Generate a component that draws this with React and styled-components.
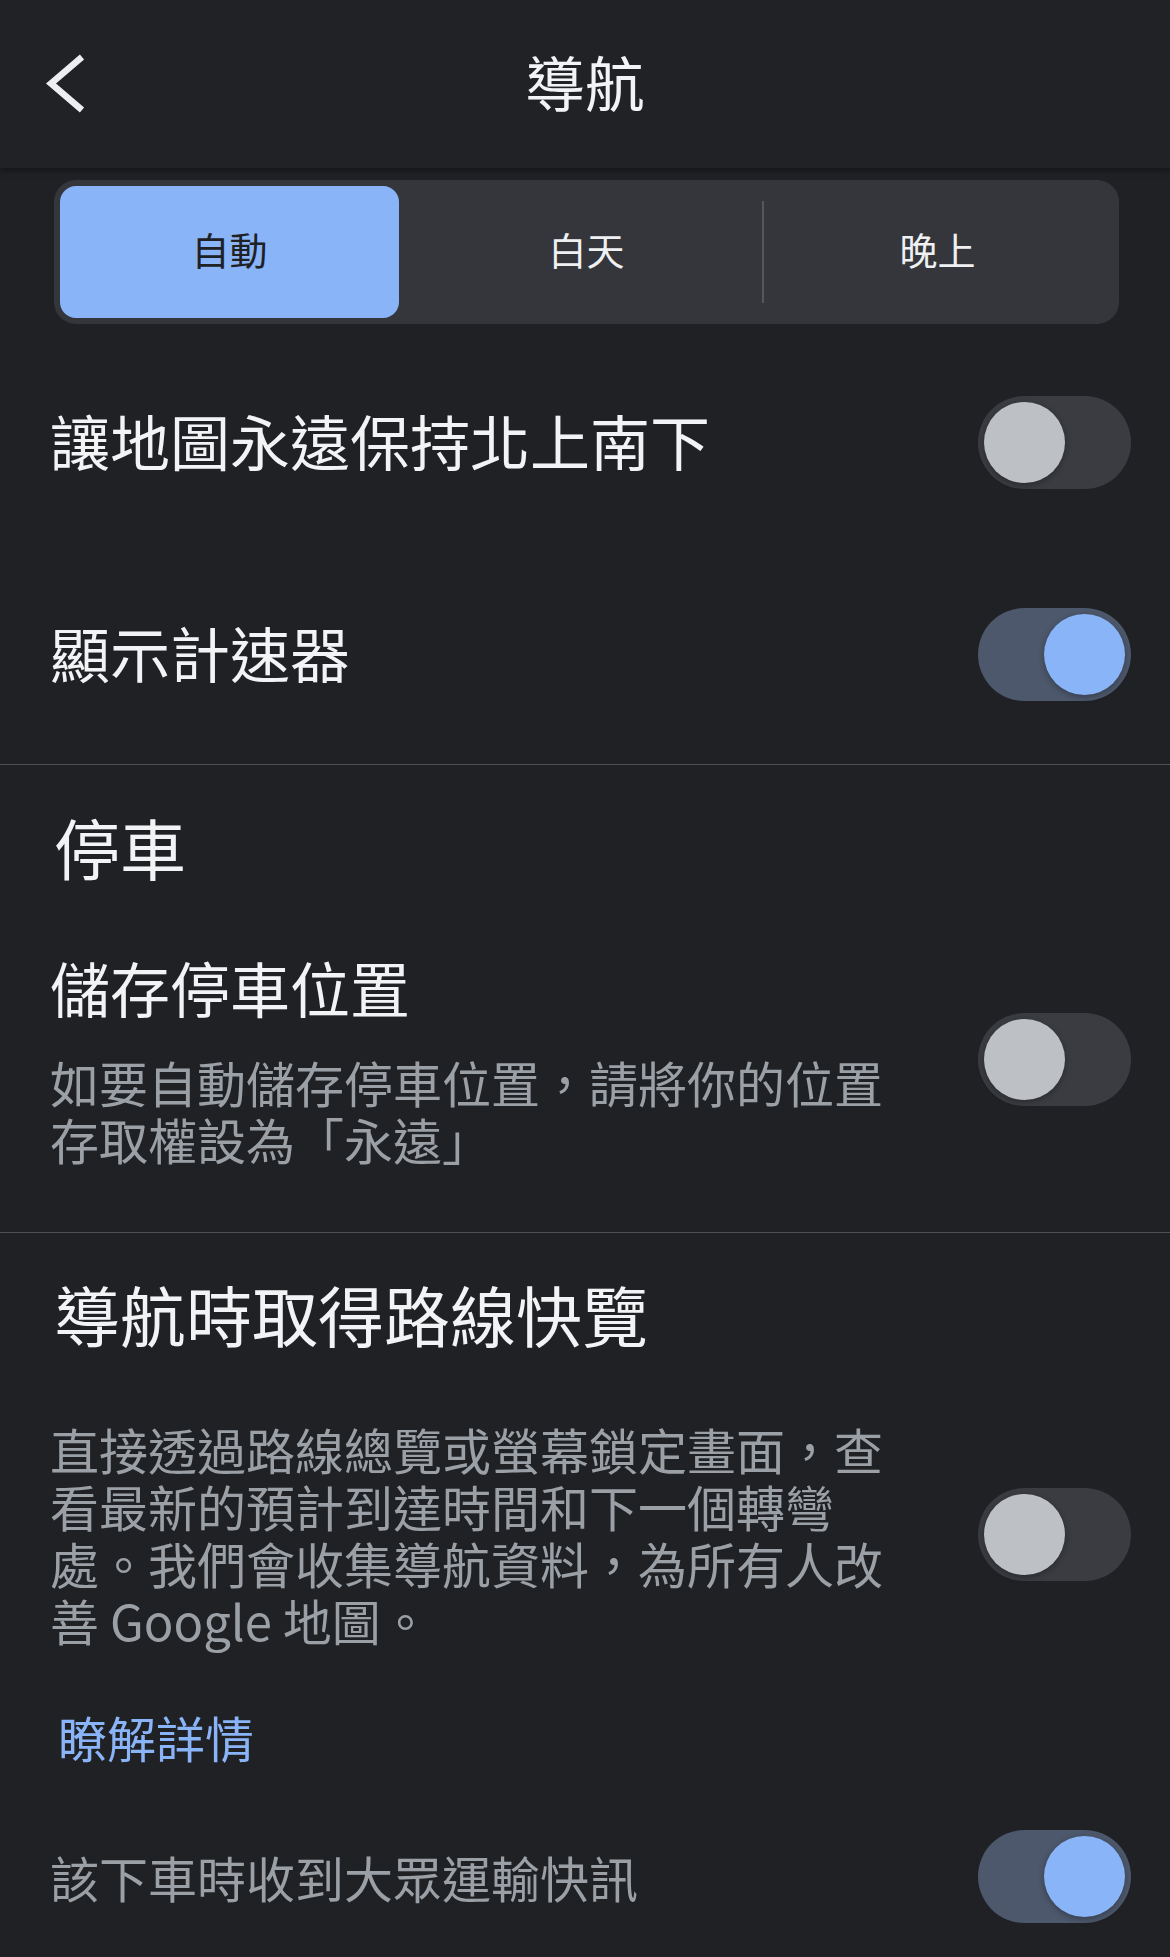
import React, { useState } from "react";
import styled, { createGlobalStyle } from "styled-components";

const GlobalStyle = createGlobalStyle`
    body {
        margin: 0;
        background: #202124;
        font-family: "Noto Sans CJK TC", "Noto Sans", sans-serif;
        -webkit-font-smoothing: antialiased;
    }
`

const App = () => {
    const [mode, setMode] = useState("auto");
    const [northUp, setNorthUp] = useState(false);
    const [speedo, setSpeedo] = useState(true);
    const [parking, setParking] = useState(false);
    const [preview, setPreview] = useState(false);
    const [transit, setTransit] = useState(true);

    const modes = [
        { key: "auto", label: "自動" },
        { key: "day", label: "白天" },
        { key: "night", label: "晚上" },
    ];

    return (
        <Page>
            <GlobalStyle />
            <Header>
                <BackButton aria-label="返回">
                    <svg width="44" height="64" viewBox="0 0 44 64">
                        <path d="M40 5 L9 31.5 L40 58" fill="none" stroke="#eceef1" strokeWidth="6.5" strokeLinecap="butt" strokeLinejoin="miter" />
                    </svg>
                </BackButton>
                <Title>導航</Title>
                <span />
            </Header>

            <Body $bottom={4}>
                <Segmented>
                    {modes.map((m, i) => (
                        <Segment
                            key={m.key}
                            $active={mode === m.key}
                            $divider={i > 0 && mode !== m.key && mode !== modes[i - 1].key}
                            onClick={() => setMode(m.key)}
                        >
                            {m.label}
                        </Segment>
                    ))}
                </Segmented>

                <Row $minHeight={212} $first>
                    <RowTitle>讓地圖永遠保持北上南下</RowTitle>
                    <Toggle on={northUp} onClick={() => setNorthUp(!northUp)} />
                </Row>
                <Row $minHeight={212}>
                    <RowTitle>顯示計速器</RowTitle>
                    <Toggle on={speedo} onClick={() => setSpeedo(!speedo)} />
                </Row>
            </Body>

            <Rule />

            <Body>
                <SectionTitle $top={41}>停車</SectionTitle>
                <Row $pad="66px 0 65px">
                    <TextCol>
                        <RowTitle>儲存停車位置</RowTitle>
                        <Description $spaced>如要自動儲存停車位置，請將你的位置存取權設為「永遠」</Description>
                    </TextCol>
                    <Toggle on={parking} onClick={() => setParking(!parking)} />
                </Row>
            </Body>

            <Rule />

            <Body>
                <SectionTitle $top={40}>導航時取得路線快覽</SectionTitle>
                <Row $pad="67px 0 0">
                    <TextCol>
                        <Description>直接透過路線總覽或螢幕鎖定畫面，查看最新的預計到達時間和下一個轉彎處。我們會收集導航資料，為所有人改善 Google 地圖。</Description>
                    </TextCol>
                    <Toggle on={preview} onClick={() => setPreview(!preview)} />
                </Row>
                <LearnMore href="#">瞭解詳情</LearnMore>
                <Row $pad="65px 0 0">
                    <Description>該下車時收到大眾運輸快訊</Description>
                    <Toggle on={transit} onClick={() => setTransit(!transit)} />
                </Row>
            </Body>
        </Page>
    )
}

// Toggle Component
const Toggle = ({ on, onClick }) => {
    return (
        <Track $on={on} onClick={onClick} role="switch" aria-checked={on}>
            <Knob $on={on} />
        </Track>
    )
}

const Page = styled.div`
    width: 1170px;
    min-height: 1957px;
    background: #202124;
    color: #f1f3f4;
`

const Header = styled.header`
    height: 168px;
    display: grid;
    grid-template-columns: 1fr auto 1fr;
    align-items: center;
    background: #212226;
    box-shadow: 0 3px 6px rgba(0, 0, 0, 0.35);
    position: relative;
    z-index: 1;
`

const BackButton = styled.button`
    justify-self: start;
    margin-left: 42px;
    padding: 0;
    border: none;
    background: none;
    display: flex;
    cursor: pointer;
`

const Title = styled.h1`
    margin: 0;
    padding-bottom: 6px;
    font-size: 60px;
    font-weight: 400;
    line-height: 80px;
    color: #f1f3f4;
`

const Body = styled.div`
    padding: 0 39px ${(p) => p.$bottom || 0}px 50px;
`

const Segmented = styled.div`
    margin: 12px 12px 0 4px;
    padding: 6px;
    height: 132px;
    display: grid;
    grid-template-columns: repeat(3, 1fr);
    background: #35363b;
    border-radius: 22px;
`

const Segment = styled.button`
    height: 132px;
    margin-right: ${(p) => (p.$active ? "12px" : "0")};
    padding: 0 0 7px;
    border: none;
    border-radius: 16px;
    background: ${(p) =>
        p.$active
            ? "#8ab4f8"
            : p.$divider
            ? "linear-gradient(#55575c, #55575c) left center / 2px 102px no-repeat"
            : "transparent"};
    color: ${(p) => (p.$active ? "#202124" : "#eef0f2")};
    font-family: inherit;
    font-size: 38px;
    cursor: pointer;
`

const Row = styled.div`
    display: flex;
    align-items: center;
    justify-content: space-between;
    gap: 40px;
    min-height: ${(p) => (p.$minHeight ? `${p.$minHeight}px` : "auto")};
    margin-top: ${(p) => (p.$first ? "12px" : "0")};
    padding: ${(p) => p.$pad || "0"};
`

const TextCol = styled.div`
    flex: 0 1 850px;
    max-width: 850px;
`

const RowTitle = styled.div`
    padding-bottom: 5px;
    font-size: 60px;
    line-height: 70px;
    color: #f1f3f4;
`

const Description = styled.div`
    margin-top: ${(p) => (p.$spaced ? "26px" : "0")};
    font-size: 49px;
    line-height: 57px;
    color: #9aa0a6;
`

const SectionTitle = styled.h2`
    margin: ${(p) => p.$top}px 0 0 4px;
    font-size: 66px;
    font-weight: 400;
    line-height: 80px;
    color: #f1f3f4;
`

const LearnMore = styled.a`
    display: block;
    margin: 60px 0 0 8px;
    font-size: 49px;
    line-height: 57px;
    color: #8ab4f8;
    text-decoration: none;
`

const Rule = styled.hr`
    margin: 0;
    border: none;
    height: 1px;
    background: #4f5156;
`

const Track = styled.div`
    flex: none;
    width: 153px;
    height: 93px;
    padding: 6px;
    box-sizing: border-box;
    border-radius: 47px;
    display: flex;
    justify-content: ${(p) => (p.$on ? "flex-end" : "flex-start")};
    align-items: center;
    background: ${(p) => (p.$on ? "#4d586c" : "#3b3c41")};
    cursor: pointer;
`

const Knob = styled.div`
    width: 81px;
    height: 81px;
    border-radius: 50%;
    background: ${(p) => (p.$on ? "#8ab4f8" : "#bdc1c6")};
    box-shadow: 0 2px 6px rgba(0, 0, 0, 0.3);
`

export default App;
